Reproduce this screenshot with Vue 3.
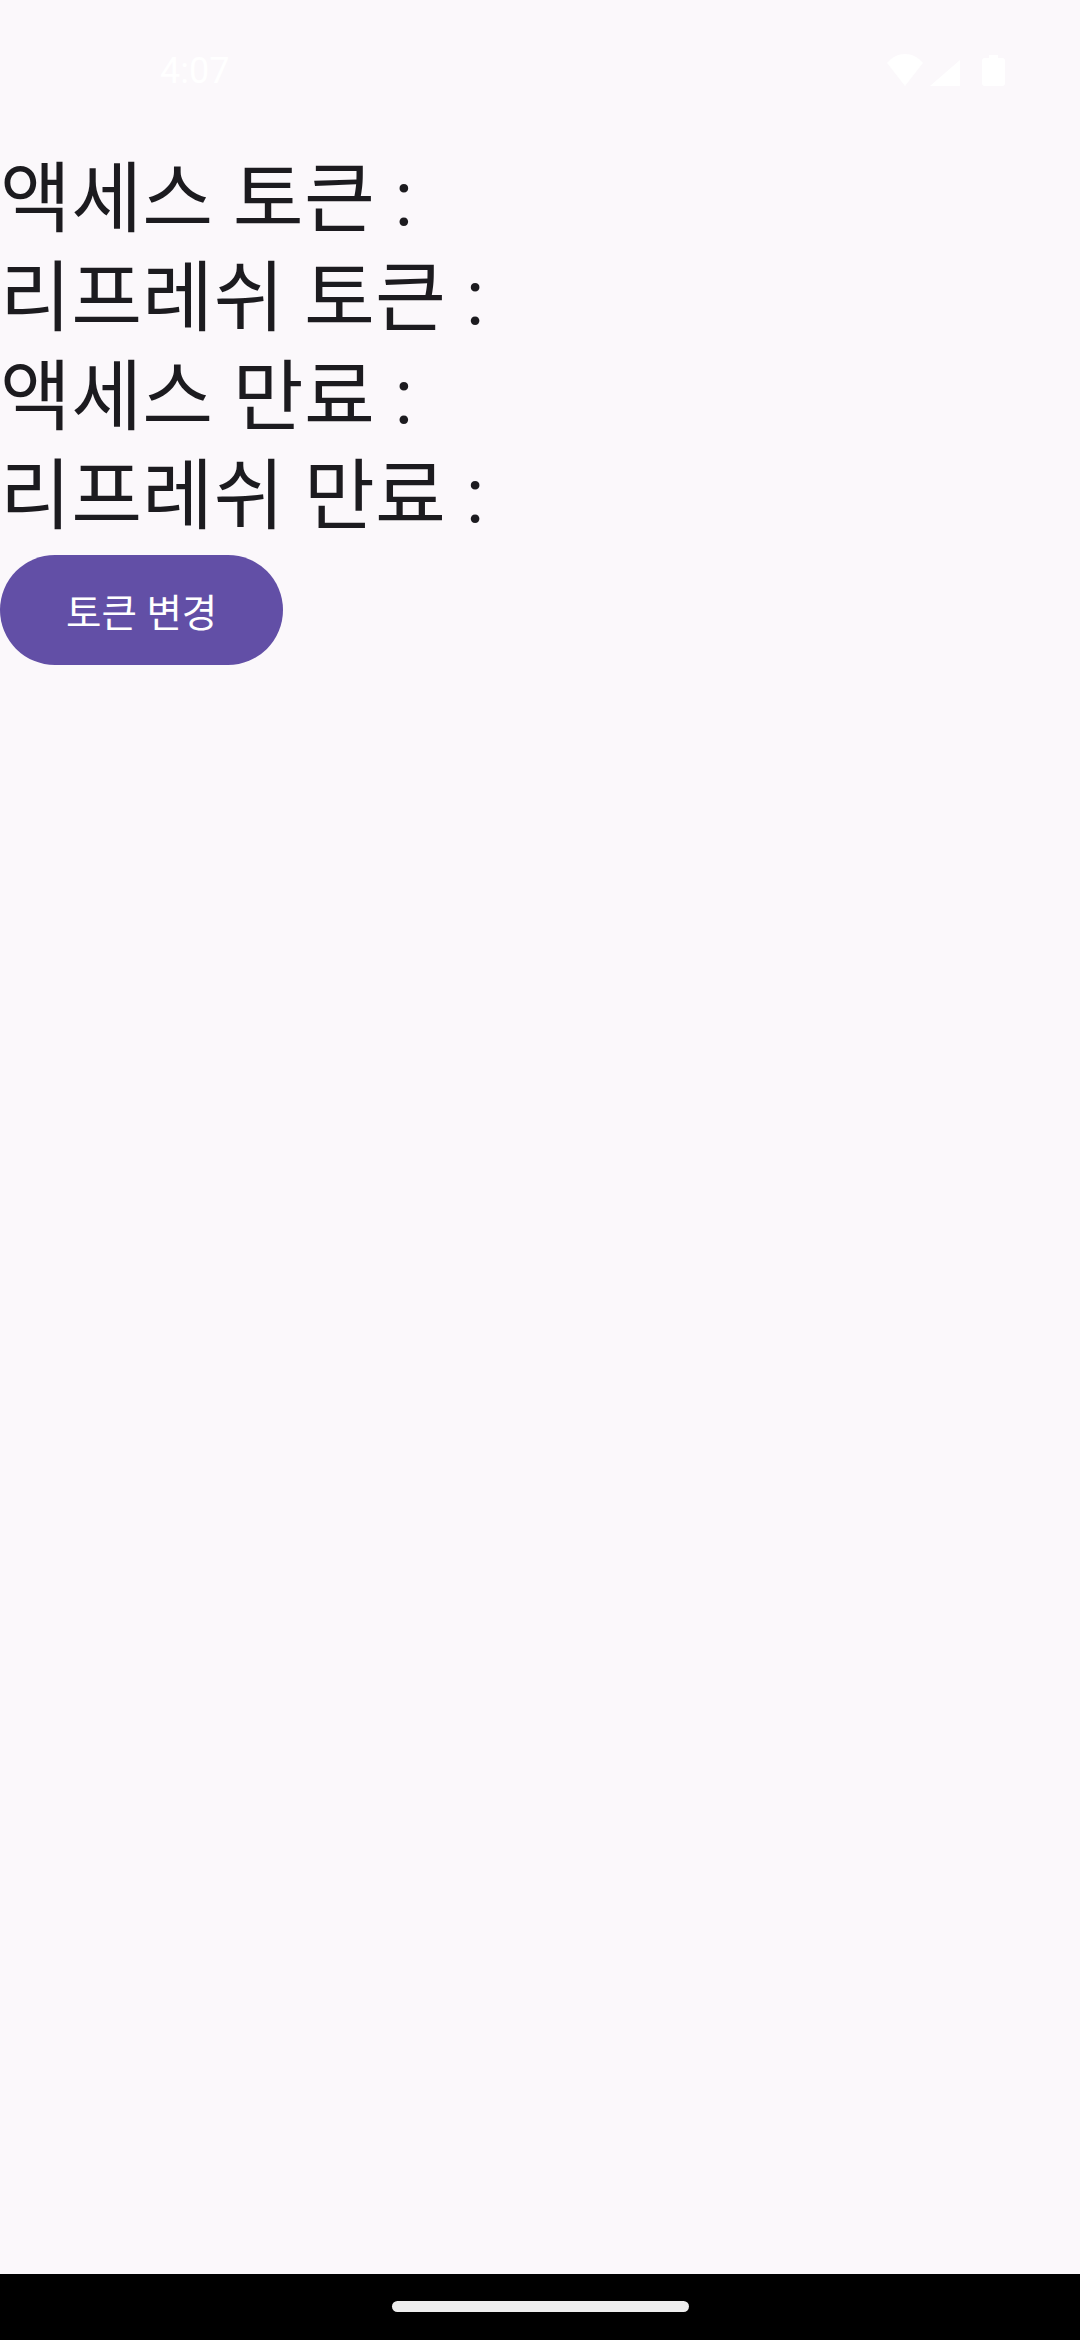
<template>
  <div class="screen">
    <div class="status-bar">
      <span class="time">4:07</span>
      <div class="status-icons">
        <svg width="36" height="32" viewBox="0 0 36 32">
          <path d="M18 32 L0 9 C10 -3 26 -3 36 9 Z" fill="#fff" />
        </svg>
        <svg class="signal" width="30" height="26" viewBox="0 0 30 26">
          <path d="M30 0 V26 H0 Z" fill="#fff" />
        </svg>
        <svg class="battery" width="23" height="31" viewBox="0 0 23 31">
          <path d="M7 0 H16 V3 H20 Q23 3 23 6 V28 Q23 31 20 31 H3 Q0 31 0 28 V6 Q0 3 3 3 H7 Z" fill="#fff" />
        </svg>
      </div>
    </div>
    <main class="content">
      <p class="token-line">액세스 토큰 :</p>
      <p class="token-line">리프레쉬 토큰 :</p>
      <p class="token-line">액세스 만료 :</p>
      <p class="token-line">리프레쉬 만료 :</p>
      <button class="change-btn" type="button">토큰 변경</button>
    </main>
    <div class="nav-bar">
      <div class="nav-handle"></div>
    </div>
  </div>
</template>

<script setup>
</script>

<style>
html,
body {
  margin: 0;
  background: #fbf8fb;
}
</style>

<style scoped>
.screen {
  width: 1080px;
  height: 2340px;
  display: flex;
  flex-direction: column;
  background: #fbf8fb;
  font-family: "Roboto", "Noto Sans CJK KR", sans-serif;
  overflow: hidden;
}

.status-bar {
  height: 151px;
  box-sizing: border-box;
  padding: 54px 75px 0 160px;
  display: flex;
  justify-content: space-between;
  align-items: flex-start;
  flex-shrink: 0;
}

.time {
  color: #fff;
  font-size: 36px;
  line-height: 34px;
}

.status-icons {
  display: flex;
  align-items: flex-end;
  gap: 7px;
}

.battery {
  margin-left: 15px;
}

.content {
  flex: 1;
  display: flex;
  flex-direction: column;
  align-items: flex-start;
}

.token-line {
  margin: 0;
  font-size: 77px;
  line-height: 99px;
  letter-spacing: 0.3px;
  color: #1c1b1f;
}

.change-btn {
  margin-top: 8px;
  height: 110px;
  padding: 0 66px;
  border: none;
  border-radius: 55px;
  background: #624fa6;
  color: #fff;
  font-family: inherit;
  font-size: 38.5px;
}

.nav-bar {
  height: 66px;
  flex-shrink: 0;
  background: #000;
  display: flex;
  justify-content: center;
  padding-top: 27px;
  box-sizing: border-box;
}

.nav-handle {
  width: 297px;
  height: 11px;
  border-radius: 6px;
  background: #eeeeee;
}
</style>
